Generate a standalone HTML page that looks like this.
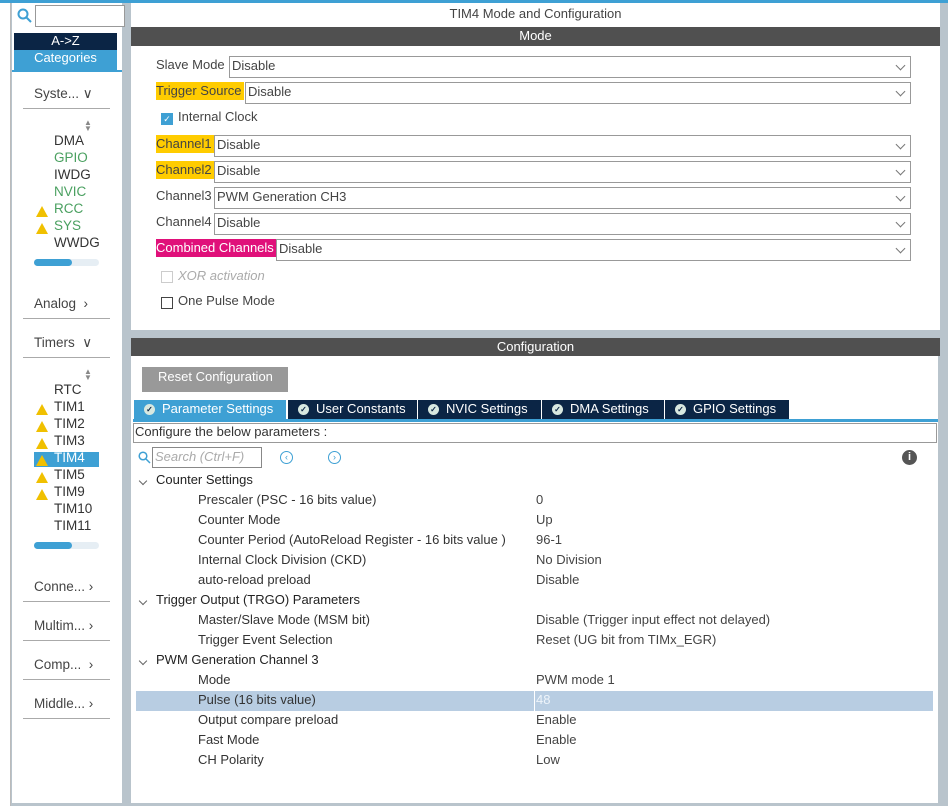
<!DOCTYPE html>
<html><head><meta charset="utf-8"><style>
*{margin:0;padding:0;box-sizing:border-box}
body{width:948px;height:806px;overflow:hidden;background:#b9c4cc;font-family:"Liberation Sans",sans-serif;font-size:13px;color:#333;position:relative}
.a{position:absolute;white-space:nowrap}
.sel{position:absolute;height:22px;border:1px solid #999;background:#fff;padding-left:2px;line-height:18px;color:#444}
.sel:after{content:"";position:absolute;right:6px;top:5px;width:6px;height:6px;border-right:1px solid #777;border-bottom:1px solid #777;transform:rotate(45deg)}
.lbl{position:absolute;line-height:18px;padding-right:2px;color:#444}
.y{background:#ffcc00}
.tab{position:absolute;top:400px;height:20px;background:#0b2545;color:#fff;line-height:17px;font-size:13px;padding-left:28px}
.tab:before{content:"✓";position:absolute;left:10px;top:4px;width:11px;height:11px;border-radius:50%;background:#d8e8e0;color:#0b2545;font-size:8px;line-height:11px;text-align:center;font-weight:bold}
.r{position:absolute;left:198px;color:#333}
.v{position:absolute;left:536px;color:#444}
.g{position:absolute;left:156px;color:#222}
.chev{position:absolute;left:140px;width:6px;height:6px;border-right:1px solid #666;border-bottom:1px solid #666;transform:rotate(45deg)}
.side{position:absolute;left:34px;color:#444;font-size:13.5px}
.sl{position:absolute;left:23px;width:87px;height:1px;background:#aaa}
.warn{position:absolute;left:36px;width:0;height:0;border-left:6px solid transparent;border-right:6px solid transparent;border-bottom:11px solid #f0c000}
.it{position:absolute;left:54px;font-size:13.5px;color:#333}
</style></head><body>
<div class="a" style="left:0;top:0;width:948px;height:3px;background:#3ea0d4"></div>
<div class="a" style="left:0;top:3px;width:11px;height:803px;background:#fff;border-right:1px solid #bbb"></div>
<div class="a" style="left:12px;top:3px;width:110px;height:800px;background:#fff"></div>
<!-- search -->
<svg class="a" style="left:17px;top:8px" width="16" height="16"><circle cx="6" cy="6" r="4.5" fill="none" stroke="#3ea0d4" stroke-width="2"/><line x1="9" y1="9" x2="14" y2="14" stroke="#3ea0d4" stroke-width="2"/></svg>
<div class="a" style="left:35px;top:5px;width:90px;height:22px;border:1px solid #999;background:#fff"></div>
<div class="a" style="left:14px;top:33px;width:103px;height:17px;background:#0b2545;color:#fff;text-align:center;line-height:15px">A-&gt;Z</div>
<div class="a" style="left:14px;top:50px;width:103px;height:20px;background:#3ea0d4;color:#fff;text-align:center;line-height:15px">Categories</div>
<div class="a" style="left:12px;top:70px;width:110px;height:2px;background:#3ea0d4"></div>
<div class="side" style="top:86px">Syste... &#x2228;</div><div class="sl" style="top:108px"></div>
<div class="a" style="left:84px;top:120px;font-size:8px;color:#888;line-height:6px">▲<br>▼</div>
<div class="it" style="top:133px">DMA</div>
<div class="it" style="top:150px;color:#4aa060">GPIO</div>
<div class="it" style="top:167px">IWDG</div>
<div class="it" style="top:184px;color:#4aa060">NVIC</div>
<div class="warn" style="top:206px"></div><div class="it" style="top:201px;color:#4aa060">RCC</div>
<div class="warn" style="top:223px"></div><div class="it" style="top:218px;color:#4aa060">SYS</div>
<div class="it" style="top:235px">WWDG</div>
<div class="a" style="left:34px;top:259px;width:65px;height:7px;background:#e6eef4;border-radius:4px"></div>
<div class="a" style="left:34px;top:259px;width:38px;height:7px;background:#3ea0d4;border-radius:4px"></div>
<div class="side" style="top:296px">Analog &nbsp;›</div><div class="sl" style="top:318px"></div>
<div class="side" style="top:335px">Timers &nbsp;&#x2228;</div><div class="sl" style="top:357px"></div>
<div class="a" style="left:84px;top:369px;font-size:8px;color:#888;line-height:6px">▲<br>▼</div>
<div class="it" style="top:382px">RTC</div>
<div class="warn" style="top:404px"></div><div class="it" style="top:399px">TIM1</div>
<div class="warn" style="top:421px"></div><div class="it" style="top:416px">TIM2</div>
<div class="warn" style="top:438px"></div><div class="it" style="top:433px">TIM3</div>
<div class="a" style="left:34px;top:452px;width:65px;height:15px;background:#3ea0d4"></div>
<div class="warn" style="top:455px"></div><div class="it" style="top:450px;color:#fff">TIM4</div>
<div class="warn" style="top:472px"></div><div class="it" style="top:467px">TIM5</div>
<div class="warn" style="top:489px"></div><div class="it" style="top:484px">TIM9</div>
<div class="it" style="top:501px">TIM10</div>
<div class="it" style="top:518px">TIM11</div>
<div class="a" style="left:34px;top:542px;width:65px;height:7px;background:#e6eef4;border-radius:4px"></div>
<div class="a" style="left:34px;top:542px;width:38px;height:7px;background:#3ea0d4;border-radius:4px"></div>
<div class="side" style="top:579px">Conne... ›</div><div class="sl" style="top:601px"></div>
<div class="side" style="top:618px">Multim... ›</div><div class="sl" style="top:640px"></div>
<div class="side" style="top:657px">Comp... &nbsp;›</div><div class="sl" style="top:679px"></div>
<div class="side" style="top:696px">Middle... ›</div><div class="sl" style="top:718px"></div>

<!-- main top -->
<div class="a" style="left:131px;top:3px;width:809px;height:327px;background:#fff"></div>
<div class="a" style="left:131px;top:6px;width:809px;text-align:center;color:#444">TIM4 Mode and Configuration</div>
<div class="a" style="left:131px;top:27px;width:809px;height:19px;background:#505050;color:#fff;text-align:center;line-height:18px">Mode</div>
<div class="lbl" style="left:156px;top:56px">Slave Mode</div><div class="sel" style="left:229px;top:56px;width:682px">Disable</div>
<div class="lbl y" style="left:156px;top:82px">Trigger Source</div><div class="sel" style="left:245px;top:82px;width:666px">Disable</div>
<div class="a" style="left:161px;top:113px;width:12px;height:12px;background:#3ea0d4;color:#fff;font-size:9px;text-align:center;line-height:12px">✓</div>
<div class="lbl" style="left:178px;top:108px">Internal Clock</div>
<div class="lbl y" style="left:156px;top:135px">Channel1</div><div class="sel" style="left:214px;top:135px;width:697px">Disable</div>
<div class="lbl y" style="left:156px;top:161px">Channel2</div><div class="sel" style="left:214px;top:161px;width:697px">Disable</div>
<div class="lbl" style="left:156px;top:187px">Channel3</div><div class="sel" style="left:214px;top:187px;width:697px">PWM Generation CH3</div>
<div class="lbl" style="left:156px;top:213px">Channel4</div><div class="sel" style="left:214px;top:213px;width:697px">Disable</div>
<div class="lbl" style="left:156px;top:239px;background:#e0107a;color:#fff">Combined Channels</div><div class="sel" style="left:276px;top:239px;width:635px">Disable</div>
<div class="a" style="left:161px;top:271px;width:12px;height:12px;border:1px solid #ccc"></div>
<div class="lbl" style="left:178px;top:267px;color:#aaa;font-style:italic">XOR activation</div>
<div class="a" style="left:161px;top:297px;width:12px;height:12px;border:1px solid #444"></div>
<div class="lbl" style="left:178px;top:292px">One Pulse Mode</div>

<!-- config -->
<div class="a" style="left:131px;top:338px;width:807px;height:465px;background:#fff"></div>
<div class="a" style="left:131px;top:338px;width:809px;height:18px;background:#505050;color:#fff;text-align:center;line-height:17px">Configuration</div>
<div class="a" style="left:142px;top:367px;width:146px;height:25px;background:#999;color:#fff;line-height:20px;padding-left:16px">Reset Configuration</div>
<div class="tab" style="left:134px;width:152px;background:#3ea0d4">Parameter Settings</div>
<div class="tab" style="left:288px;width:129px">User Constants</div>
<div class="tab" style="left:418px;width:123px">NVIC Settings</div>
<div class="tab" style="left:542px;width:122px">DMA Settings</div>
<div class="tab" style="left:665px;width:124px">GPIO Settings</div>
<div class="a" style="left:133px;top:419px;width:805px;height:3px;background:#3ea0d4"></div>
<div class="a" style="left:133px;top:423px;width:804px;height:20px;border:1px solid #999;line-height:16px;padding-left:1px;color:#333">Configure the below parameters :</div>
<svg class="a" style="left:138px;top:451px" width="13" height="13"><circle cx="5" cy="5" r="3.8" fill="none" stroke="#3ea0d4" stroke-width="1.5"/><line x1="8" y1="8" x2="12" y2="12" stroke="#3ea0d4" stroke-width="1.5"/></svg>
<div class="a" style="left:152px;top:447px;width:110px;height:21px;border:1px solid #888;color:#aaa;font-style:italic;line-height:18px;padding-left:2px">Search (Ctrl+F)</div>
<div class="a" style="left:280px;top:451px;width:13px;height:13px;border:1px solid #3ea0d4;border-radius:50%;color:#3ea0d4;font-size:9px;line-height:11px;text-align:center">‹</div>
<div class="a" style="left:328px;top:451px;width:13px;height:13px;border:1px solid #3ea0d4;border-radius:50%;color:#3ea0d4;font-size:9px;line-height:11px;text-align:center">›</div>
<div class="a" style="left:902px;top:450px;width:15px;height:15px;border-radius:50%;background:#555;color:#fff;font-size:11px;font-weight:bold;text-align:center;line-height:15px">i</div>

<div class="a" style="left:136px;top:691px;width:797px;height:20px;background:#b8cde2"></div>
<div class="a" style="left:534px;top:691px;width:1px;height:20px;background:#fff"></div>
<div class="chev" style="top:478px"></div><div class="g" style="top:472px">Counter Settings</div>
<div class="r" style="top:492px">Prescaler (PSC - 16 bits value)</div><div class="v" style="top:492px">0</div>
<div class="r" style="top:512px">Counter Mode</div><div class="v" style="top:512px">Up</div>
<div class="r" style="top:532px">Counter Period (AutoReload Register - 16 bits value )</div><div class="v" style="top:532px">96-1</div>
<div class="r" style="top:552px">Internal Clock Division (CKD)</div><div class="v" style="top:552px">No Division</div>
<div class="r" style="top:572px">auto-reload preload</div><div class="v" style="top:572px">Disable</div>
<div class="chev" style="top:598px"></div><div class="g" style="top:592px">Trigger Output (TRGO) Parameters</div>
<div class="r" style="top:612px">Master/Slave Mode (MSM bit)</div><div class="v" style="top:612px">Disable (Trigger input effect not delayed)</div>
<div class="r" style="top:632px">Trigger Event Selection</div><div class="v" style="top:632px">Reset (UG bit from TIMx_EGR)</div>
<div class="chev" style="top:658px"></div><div class="g" style="top:652px">PWM Generation Channel 3</div>
<div class="r" style="top:672px">Mode</div><div class="v" style="top:672px">PWM mode 1</div>
<div class="r" style="top:692px">Pulse (16 bits value)</div><div class="v" style="top:692px;color:#eef4fa">48</div>
<div class="r" style="top:712px">Output compare preload</div><div class="v" style="top:712px">Enable</div>
<div class="r" style="top:732px">Fast Mode</div><div class="v" style="top:732px">Enable</div>
<div class="r" style="top:752px">CH Polarity</div><div class="v" style="top:752px">Low</div>
</body></html>
